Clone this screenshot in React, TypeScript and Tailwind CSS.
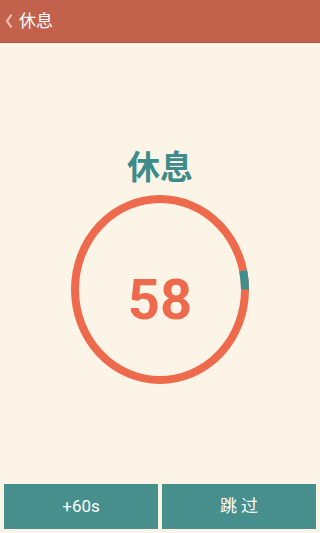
import React from "react";

const font = { fontFamily: 'Roboto, "Noto Sans CJK SC", sans-serif' };

function Ring({ elapsed, total }: { elapsed: number; total: number }) {
    const cx = 89, cy = 94.5, rx = 85, ry = 90.5;
    const angle = (elapsed / total) * Math.PI * 2;
    const ex = cx + rx * Math.cos(angle);
    const ey = cy - ry * Math.sin(angle);
    return (
        <svg width="178" height="189" viewBox="0 0 178 189" className="block">
            <ellipse cx={cx} cy={cy} rx={rx} ry={ry} fill="none" stroke="#ee6a4d" strokeWidth="8" />
            <path d={`M${cx + rx} ${cy} A${rx} ${ry} 0 0 0 ${ex} ${ey}`} fill="none" stroke="#3f8f8e" strokeWidth="8" />
        </svg>
    );
}

export default function App() {
    const remaining = 58;
    return (
        <div className="h-[533px] w-[320px] flex flex-col bg-[#fcf5e7]" style={font}>
            <div className="h-[43px] bg-[#c2614c] border-b border-[#b0553f] flex items-center pl-[5px] gap-[6px]">
                <svg width="8" height="16" viewBox="0 0 8 16" className="block">
                    <path d="M6.5 1.5 L2 8 L6.5 14.5" fill="none" stroke="#f2b7a8" strokeWidth="2.2" />
                </svg>
                <span className="text-white text-[17px] leading-none">休息</span>
            </div>
            <div className="flex-1 flex flex-col items-center">
                <div className="mt-[108px] text-[33px] leading-none font-bold text-[#3d8c8b]">休息</div>
                <div className="relative mt-[11px]">
                    <Ring elapsed={60 - remaining} total={60} />
                    <div className="absolute inset-0 flex items-center justify-center pt-[20px]">
                        <span className="text-[56px] leading-none font-bold text-[#ee6a4d]">{remaining}</span>
                    </div>
                </div>
            </div>
            <div className="flex gap-[4px] px-[4px] pb-[4px]">
                <button className="flex-1 h-[45px] bg-[#468f8c] text-white text-[17px]">+60s</button>
                <button className="flex-1 h-[45px] bg-[#468f8c] text-white text-[17px]">跳 过</button>
            </div>
        </div>
    );
}
